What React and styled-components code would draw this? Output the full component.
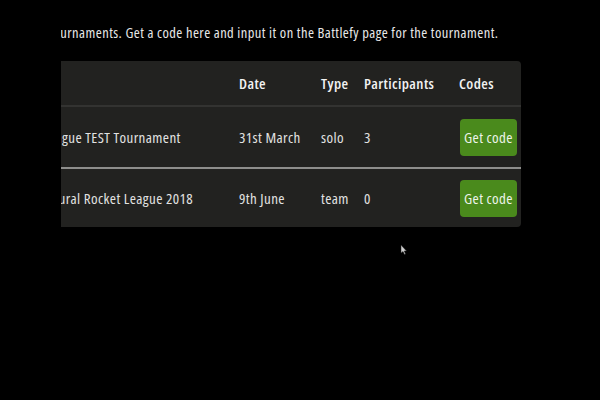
import styled, { createGlobalStyle } from "styled-components";

const Global = createGlobalStyle`
    html, body {
        margin: 0;
        background: #000;
    }
    body {
        font-family: "Open Sans", "Liberation Sans", sans-serif;
        font-stretch: 75%;
        letter-spacing: 0.4px;
        color: #e6e6e6;
    }
`

const Frame = styled.div`
    position: relative;
    width: 600px;
    height: 400px;
    background: #000;
    padding-left: 61px;
    box-sizing: border-box;
`
const Clip = styled.div`
    width: 460px;
    overflow: hidden;
`
const Inner = styled.div`
    margin-left: -${p => p.$shift}px;
`
const Intro = styled.p`
    margin: 0 0 0 ${p => p.$indent}px;
    padding-top: 24px;
    height: 61px;
    box-sizing: border-box;
    font-size: 14.5px;
    letter-spacing: 0.45px;
    line-height: 18px;
    white-space: nowrap;
    color: #e8e8e8;
`
const Table = styled.table`
    border-collapse: separate;
    border-spacing: 0;
    background: #222220;
    border-radius: 0 4px 4px 0;
`
const Head = styled.th`
    height: 46px;
    padding: 0 0 0 ${p => p.$pad || 0}px;
    text-align: left;
    font-size: 15px;
    font-weight: 600;
    color: #f2f2f2;
    border-bottom: 2px solid #333331;
    width: ${p => p.$w}px;
    box-sizing: border-box;
`
const Cell = styled.td`
    height: ${p => (p.$line ? 60 : 58)}px;
    padding: 0 0 0 ${p => p.$pad || 0}px;
    font-size: 15px;
    color: #e2e2e2;
    white-space: nowrap;
    border-bottom: ${p => (p.$line ? "2px solid #8e8e8c" : "none")};
`
const CodeButton = styled.button`
    font-family: inherit;
    font-stretch: 75%;
    letter-spacing: 0.4px;
    font-size: 15px;
    color: #eef4ea;
    background: #4a8a1c;
    border: none;
    border-radius: 4px;
    width: 57px;
    height: 37px;
    padding: 0;
    margin-left: 1px;
    display: block;
`
// mouse pointer sitting over the page
const Pointer = styled.svg`
    position: absolute;
    left: 400px;
    top: 244px;
`

const rows = [
    { name: "Rocket League TEST Tournament", date: "31st March", type: "solo", count: 3 },
    { name: "UC Intramural Rocket League 2018", date: "9th June", type: "team", count: 0 },
]

export default function App() {
    return <Frame>
        <Global />
        <Clip>
            <Inner $shift={83}>
                <Intro $indent={-9}>Rocket League tournaments. Get a code here and input it on the Battlefy page for the tournament.</Intro>
                <Table>
                    <thead>
                        <tr>
                            <Head $w={261} $pad={25}>Name</Head>
                            <Head $w={82}>Date</Head>
                            <Head $w={43}>Type</Head>
                            <Head $w={95}>Participants</Head>
                            <Head $w={62}>Codes</Head>
                        </tr>
                    </thead>
                    <tbody>
                        {rows.map((r, i) => (
                            <tr key={r.name}>
                                <Cell $line={i === 0} $pad={25}>{r.name}</Cell>
                                <Cell $line={i === 0}>{r.date}</Cell>
                                <Cell $line={i === 0}>{r.type}</Cell>
                                <Cell $line={i === 0}>{r.count}</Cell>
                                <Cell $line={i === 0}><CodeButton>Get code</CodeButton></Cell>
                            </tr>
                        ))}
                    </tbody>
                </Table>
            </Inner>
        </Clip>
        <Pointer width="8" height="12" viewBox="0 0 8 12">
            <path d="M1 1 L1 9 L3 7.5 L4.5 10.5 L5.5 10 L4.2 7 L6.5 7 Z" fill="#d0d0d0" stroke="#222" strokeWidth="0.5" />
        </Pointer>
    </Frame>
}
